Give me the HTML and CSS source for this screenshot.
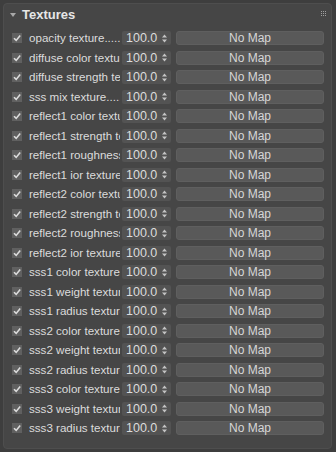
FILE: index.html
```html
<!DOCTYPE html>
<html lang="en">
<head>
    <meta charset="UTF-8">
    <title>Textures</title>
    <link rel="stylesheet" href="styles.css">
</head>
<body>
    <div class="rollout">
        <div class="rollout-head">
            <span class="arrow"></span>
            <span class="title">Textures</span>
            <span class="grip"><i></i><i></i><i></i><i></i><i></i><i></i><i></i><i></i><i></i></span>
        </div>

        <div class="rows" id="rows"></div>
    </div>

    <script>
        const labels = [
            "opacity texture........", "diffuse color texture....", "diffuse strength texture",
            "sss mix texture........", "reflect1 color texture...", "reflect1 strength texture",
            "reflect1 roughness texture", "reflect1 ior texture.....", "reflect2 color texture...",
            "reflect2 strength texture", "reflect2 roughness texture", "reflect2 ior texture.....",
            "sss1 color texture......", "sss1 weight texture.....", "sss1 radius texture.....",
            "sss2 color texture......", "sss2 weight texture.....", "sss2 radius texture.....",
            "sss3 color texture......", "sss3 weight texture.....", "sss3 radius texture....."
        ];

        const check = '<svg width="10" height="10" viewBox="0 0 10 10"><path d="M2 5.2 L4.2 7.4 L8.2 2.6" fill="none" stroke="#dcdcdc" stroke-width="1.6"/></svg>';
        const arrows = '<svg width="5" height="9" viewBox="0 0 5 9"><path d="M2.5 0.5 L5 3.5 L0 3.5 Z M0 5.5 L5 5.5 L2.5 8.5 Z" fill="#c4c4c4"/></svg>';

        document.getElementById("rows").innerHTML = labels.map(label =>
            '<div class="row"><span class="check">' + check + '</span>' +
            '<span class="label">' + label + '</span>' +
            '<span class="spin"><span>100.0</span>' + arrows + '</span>' +
            '<span class="map">No Map</span></div>'
        ).join("");
    </script>
</body>
</html>
```

FILE: styles.css
```css
* { box-sizing: border-box; }
html, body { height: 100%; }
body { margin: 0; padding: 3px 4px 3px 3px; background-color: #3e3e3e; font-family: "Liberation Sans", Arial, sans-serif; font-size: 12px; color: #dcdcdc; }

.rollout { height: 100%; background-color: #464646; border-radius: 4px; border: 1px solid #4e4e4e; }
.rollout-head { display: flex; align-items: center; height: 20px; padding: 0 5px 0 6px; }
.arrow { width: 0; height: 0; border-left: 3px solid transparent; border-right: 3px solid transparent; border-top: 4px solid #a8a8a8; margin-right: 6px; margin-top: 1px; }
.title { font-weight: bold; font-size: 13px; color: #e6e6e6; flex: 1; }
.grip { display: grid; grid-template-columns: repeat(3, 1px); gap: 1px; margin-top: -2px; }
.grip i { width: 1px; height: 1px; background-color: #a0a0a0; }

.rows { display: flex; flex-direction: column; gap: 5.5px; padding: 7px 0 0 8px; }
.row { display: flex; align-items: center; height: 14px; }
.check { display: flex; width: 10px; height: 10px; background-color: #606060; margin-right: 7px; }
.label { width: 91px; white-space: nowrap; overflow: hidden; line-height: 14px; font-size: 11.6px; }
.spin { display: flex; align-items: center; justify-content: space-between; width: 49px; height: 14px; margin-left: 2px; padding: 0 4px 0 4px; background-color: #535353; border-radius: 2px; line-height: 14px; font-size: 12.5px; }
.map { width: 148px; height: 14px; margin-left: 5px; background-color: #595959; border: 1px solid #5f5f5f; border-radius: 3px; text-align: center; line-height: 12px; color: #d6d6d6; }
```
